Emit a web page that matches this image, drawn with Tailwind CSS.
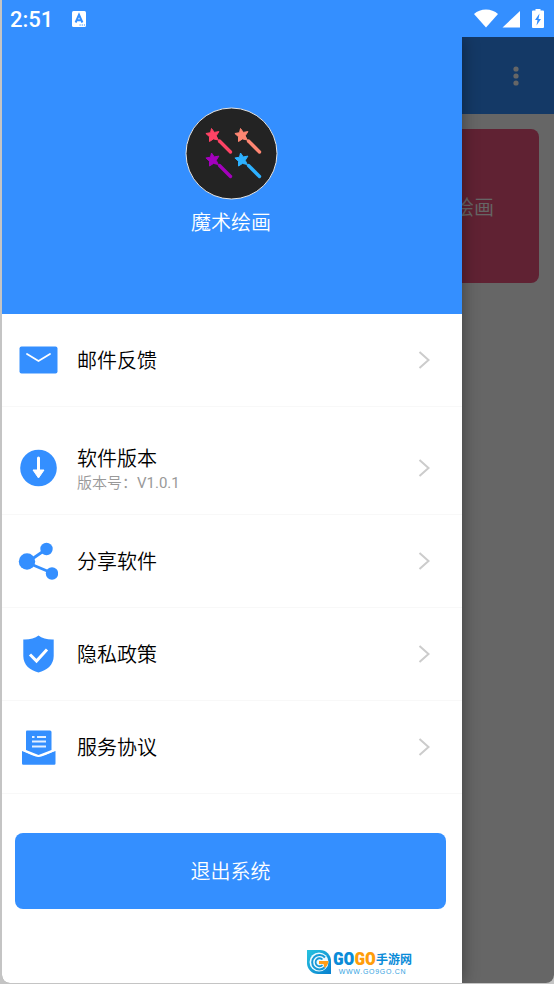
<!DOCTYPE html>
<html lang="zh-CN">
<head>
<meta charset="utf-8">
<meta name="viewport" content="width=device-width, initial-scale=1">
<title>魔术绘画</title>
<script src="https://cdn.jsdelivr.net/npm/@tailwindcss/browser@4"></script>
</head>
<body class="bg-[#c4c4c4] font-['Roboto','Noto_Sans_CJK_SC',sans-serif] text-black">
<div class="flex min-h-screen flex-col pb-px pl-0.5">
  <header class="flex h-[37px] shrink-0 items-center bg-[#348fff] pr-2.5 pl-2 text-white">
    <time class="pt-0.5 text-[22px] leading-6 font-medium">2:51</time>
    <svg class="ml-[18px] h-4 w-4" viewBox="0 0 16 16" aria-hidden="true"><rect x="1" width="14" height="16" rx="1.5" fill="#fff"/><path d="M4.600 11.500 8 3.800 11.400 11.500M5.800 9.200h4.400" fill="none" stroke="#348fff" stroke-width="2"/><path d="M8.500 14h1.200M10.700 14h1.200M12.900 14h1.200" stroke="#348fff" stroke-width="1.200"/></svg>
    <div class="ml-auto flex items-center">
      <svg class="h-5 w-6" viewBox="0 0 24 20" aria-label="WLAN"><path d="M0 5C3.200 2 7.400 .5 12 .5s8.800 1.500 12 4.500L12 18.500z" fill="#fff"/></svg>
      <svg class="ml-1 h-5 w-[18px]" viewBox="0 0 18 20" aria-label="信号"><path d="M18 2v16.500H.5z" fill="#fff"/></svg>
      <svg class="ml-3 h-5 w-3" viewBox="0 0 12 20" aria-label="电池"><path d="M3.500 0h5v1.500H11q1 0 1 1v15.500q0 1-1 1H1q-1 0-1-1V2.500q0-1 1-1h2.500z" fill="#fff"/><path d="M7.500 4.500 3 11h2.500L4.500 16.500 9 10H6.500z" fill="#348fff"/></svg>
    </div>
  </header>

  <div class="relative flex grow flex-col overflow-hidden rounded-b-lg">
    <!-- Page behind the drawer -->
    <main class="absolute inset-0 bg-white">
      <div class="flex h-[77px] items-center justify-end bg-[#348fff] pr-[28px]">
        <button class="flex h-10 w-5 items-center justify-center" aria-label="更多">
          <svg class="h-5 w-1.5" viewBox="0 0 6 20" fill="#fff"><circle cx="3" cy="3" r="2.600"/><circle cx="3" cy="10" r="2.600"/><circle cx="3" cy="17" r="2.600"/></svg>
        </button>
      </div>
      <div class="flex justify-end p-[15px]">
        <a href="#" class="flex h-[154px] w-1/3 items-center justify-end rounded-lg bg-[#ef5580] pt-0.5 pr-[45px] font-['Noto_Sans_CJK_SC_DemiLight','Noto_Sans_CJK_SC',sans-serif] text-xl font-[350] text-white">绘画</a>
      </div>
    </main>
    <div class="absolute inset-0 bg-black/60"></div>

    <aside class="relative flex w-5/6 grow flex-col bg-white font-['Roboto','Noto_Sans_CJK_SC_DemiLight','Noto_Sans_CJK_SC',sans-serif] shadow-[0_0_16px_rgba(0,0,0,0.4)]">
      <div class="flex h-[277px] flex-col items-center bg-[#348fff] pt-[70px] pr-0.5 text-white">
        <svg class="h-[93px] w-[93px]" viewBox="0 0 93 93" aria-hidden="true">
          <defs>
            <g id="wand"><path d="M-1-6.500 1.800-2.600 6.400-3.400 3.700.8 5.800 5 1 3.900-3 6.500-3 1.700-6.600-1.500-2-2.300z" stroke="currentColor" stroke-linejoin="round" fill="currentColor"/><path d="M7 6 18 17" stroke="currentColor" stroke-width="3.400" stroke-linecap="round"/></g>
          </defs>
          <circle cx="46.500" cy="46.500" r="45.500" fill="#232323" stroke="#e5e5e5"/>
          <use href="#wand" x="27.500" y="28" color="#ff4365"/>
          <use href="#wand" x="56.500" y="28" color="#ff8672"/>
          <use href="#wand" x="27.500" y="52.500" color="#a400bd"/>
          <use href="#wand" x="56.500" y="52.500" color="#2db1ff"/>
        </svg>
        <h1 class="mt-[9px] text-xl leading-7 font-[350]">魔术绘画</h1>
      </div>

      <nav class="font-[350]">
        <a href="#" class="flex h-[93px] items-center border-b border-[#f8f8f8] pr-8 pl-4">
          <svg class="h-10 w-10" viewBox="0 0 40 40" aria-hidden="true"><rect x="1.500" y="6.500" width="38" height="27" rx="2" fill="#348fff"/><path d="m9 14 11.500 7L32 14" fill="none" stroke="#fff" stroke-width="1.800" stroke-linecap="round"/></svg>
          <span class="ml-[19px] grow pt-0.5 text-xl">邮件反馈</span>
          <svg class="h-5 w-3" viewBox="0 0 12 20" fill="none" stroke="#ccc" stroke-width="2" aria-hidden="true"><path d="m1.500 2 9 8-9 8"/></svg>
        </a>
        <a href="#" class="mt-[15px] flex h-[93px] items-center border-b border-[#f8f8f8] pr-8 pl-4">
          <svg class="h-10 w-10" viewBox="0 0 40 40" aria-hidden="true"><circle cx="20.500" cy="20" r="18.300" fill="#348fff"/><path d="M20.500 10v13" stroke="#fff" stroke-width="3" stroke-linecap="round"/><path d="M15 22h11l-5.500 8z" fill="#fff" stroke="#fff" stroke-linejoin="round"/></svg>
          <span class="ml-[19px] flex grow flex-col pt-0.5"><span class="text-xl leading-7">软件版本</span><span class="text-[15px] leading-5 font-normal text-[#999]">版本号：V1.0.1</span></span>
          <svg class="h-5 w-3" viewBox="0 0 12 20" fill="none" stroke="#ccc" stroke-width="2" aria-hidden="true"><path d="m1.500 2 9 8-9 8"/></svg>
        </a>
        <a href="#" class="flex h-[93px] items-center border-b border-[#f8f8f8] pr-8 pl-4">
          <svg class="h-10 w-10" viewBox="0 0 40 40" fill="#348fff" aria-hidden="true"><path d="M28.500 8 9 21.500 34 32" fill="none" stroke="#348fff" stroke-width="2.800"/><circle cx="28.500" cy="8" r="6.200"/><circle cx="9" cy="20.500" r="8.200"/><circle cx="34" cy="32.500" r="6.200"/></svg>
          <span class="ml-[19px] grow pt-0.5 text-xl">分享软件</span>
          <svg class="h-5 w-3" viewBox="0 0 12 20" fill="none" stroke="#ccc" stroke-width="2" aria-hidden="true"><path d="m1.500 2 9 8-9 8"/></svg>
        </a>
        <a href="#" class="flex h-[93px] items-center border-b border-[#f8f8f8] pr-8 pl-4">
          <svg class="h-10 w-10" viewBox="0 0 40 40" aria-hidden="true"><path d="M20.500 1.500C24 4.500 30 5.800 35.700 5.500V22c0 9-7 14.500-15.200 16.500C12.300 36.500 5.300 31 5.300 22V5.500C11 5.800 17 4.500 20.500 1.500z" fill="#348fff"/><path d="m12 20.500 6.500 6.500L29 15.500" fill="none" stroke="#fff" stroke-width="3"/></svg>
          <span class="ml-[19px] grow pt-0.5 text-xl">隐私政策</span>
          <svg class="h-5 w-3" viewBox="0 0 12 20" fill="none" stroke="#ccc" stroke-width="2" aria-hidden="true"><path d="m1.500 2 9 8-9 8"/></svg>
        </a>
        <a href="#" class="flex h-[93px] items-center border-b border-[#f8f8f8] pr-8 pl-4">
          <svg class="h-10 w-10" viewBox="0 0 40 40" aria-hidden="true"><path d="M9 3.500h23q1.500 0 1.500 1.500V23l-13 5L8 23V4.500q0-1 1-1z" fill="#348fff"/><path d="M4 24 20.500 30 37.500 24V36.500q0 1.200-1.200 1.200H5.200Q4 37.700 4 36.500z" fill="#348fff"/><path d="M4 22.500Q16 29 20.500 29T37.500 22.500" fill="none" stroke="#fff" stroke-width="1.500"/><path d="M14 10h2.500M19 10h9M14 14.500h14M14 19.500h14" stroke="#e4f0ff" stroke-width="2"/></svg>
          <span class="ml-[19px] grow pt-0.5 text-xl">服务协议</span>
          <svg class="h-5 w-3" viewBox="0 0 12 20" fill="none" stroke="#ccc" stroke-width="2" aria-hidden="true"><path d="m1.500 2 9 8-9 8"/></svg>
        </a>
      </nav>

      <div class="pt-[39px] pr-4 pl-[13px]">
        <button class="h-[76px] w-full rounded-lg bg-[#348fff] pt-0.5 text-xl font-[350] text-white">退出系统</button>
      </div>

      <div class="mt-auto flex items-center justify-end gap-px pr-[50px] pb-2">
        <svg class="h-[26px] w-[26px]" viewBox="0 0 26 26" fill="none" aria-hidden="true">
          <defs><linearGradient id="badge" x1="0" y1="0" x2="1" y2="1"><stop stop-color="#27c3df"/><stop offset="1" stop-color="#087fcf"/></linearGradient></defs>
          <path d="M1 1h13a11 11 0 0 1 11 11v13H12A11 11 0 0 1 1 14z" fill="url(#badge)"/>
          <circle cx="13" cy="13" r="9.500" fill="#eefaff"/>
          <path d="M19 8.500A7.300 7.300 0 1 0 19 18" stroke="#1699d6" stroke-width="2"/>
          <path d="M16.500 10.500a4 4 0 1 0 0 5.500" stroke="#1699d6" stroke-width="1.800"/>
          <path d="M13 12h9.500q-.5 5-4 7l-1-4H13z" fill="#ff9d16"/>
        </svg>
        <div class="flex flex-col">
          <div class="flex items-center leading-[19px] font-bold text-[#0a8bd8]">
            <span class="font-['Liberation_Sans_Narrow','Roboto_Condensed','Roboto',sans-serif] text-[18px] font-black">GO</span><span class="font-['Liberation_Sans_Narrow','Roboto_Condensed','Roboto',sans-serif] text-[18px] font-black text-[#ff9d0a]">GO</span><span class="font-['Noto_Sans_CJK_SC',sans-serif] text-[12px]">手游网</span>
          </div>
          <span class="text-center font-['Liberation_Sans',sans-serif] text-[7px] leading-[7px] tracking-widest text-[#35a4df]">WWW.GO9GO.CN</span>
        </div>
      </div>
    </aside>
  </div>
</div>
</body>
</html>
